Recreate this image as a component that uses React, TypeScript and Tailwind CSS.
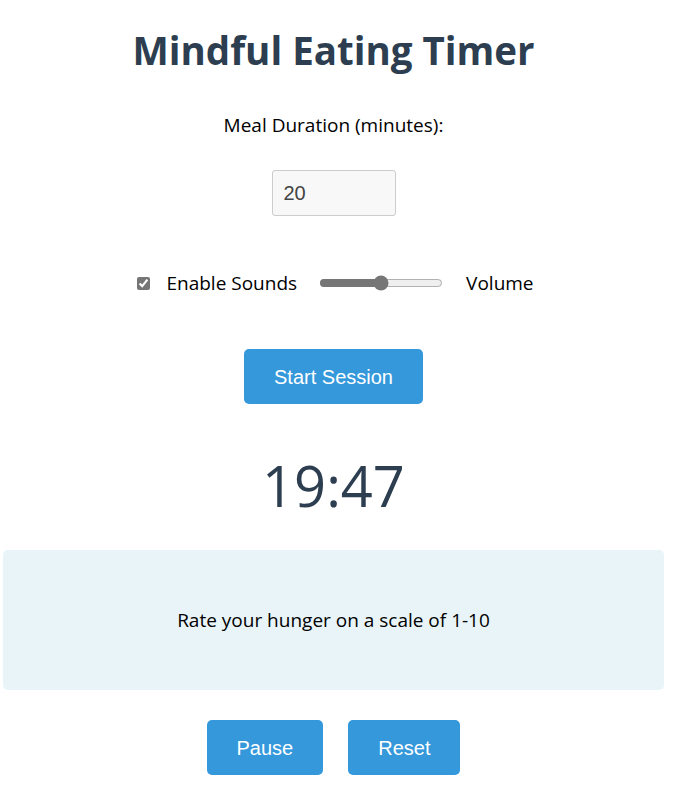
import { useState } from "react";

export default function App() {
  const [sounds, setSounds] = useState(true);
  const [volume, setVolume] = useState(50);

  return (
    <div className="min-h-[788px] bg-white">
      <div className="ml-[3px] w-[661px] text-center font-['Open_Sans',sans-serif] text-black">
        <h1 className="pt-[26px] text-[38.5px] font-bold leading-[48px] text-[#2c3e50]">Mindful Eating Timer</h1>

        <div className="mt-[39px] text-[19px] leading-[24px]">Meal Duration (minutes):</div>

        <div className="mt-[33px] flex justify-center">
          <input
            type="number"
            defaultValue={20}
            className="h-[46px] w-[124px] rounded-[3px] border border-[#cccccc] bg-[#f8f8f8] px-[11px] font-['Liberation_Sans',Arial,sans-serif] text-[20px] text-[#444] outline-none"
          />
        </div>

        <div className="mt-[52px] flex h-[30px] items-center justify-center pl-[4px] text-[19px]">
          <input
            type="checkbox"
            checked={sounds}
            onChange={(e) => setSounds(e.target.checked)}
            className="h-[13px] w-[13px] accent-[#767676]"
          />
          <span className="ml-[16px]">Enable Sounds</span>
          <input
            type="range"
            min={0}
            max={100}
            value={volume}
            onChange={(e) => setVolume(Number(e.target.value))}
            className="ml-[22px] w-[124px] accent-[#767676]"
          />
          <span className="ml-[23px]">Volume</span>
        </div>

        <div className="mt-[51px] flex justify-center">
          <button
            type="button"
            className="h-[55px] rounded-[5px] bg-[#3498db] px-[30px] font-['Liberation_Sans',Arial,sans-serif] text-[20px] text-white"
          >
            Start Session
          </button>
        </div>

        <div className="mt-[41px] text-[56px] font-normal leading-[80px] text-[#2c3e50]">19:47</div>

        <div className="mt-[25px] flex h-[140px] items-center justify-center rounded-[5px] bg-[#e8f4f8] text-[19px]">
          Rate your hunger on a scale of 1-10
        </div>

        <div className="mt-[30px] flex justify-center gap-[25px] pb-[13px]">
          <button
            type="button"
            className="h-[55px] rounded-[5px] bg-[#3498db] px-[30px] font-['Liberation_Sans',Arial,sans-serif] text-[20px] text-white"
          >
            Pause
          </button>
          <button
            type="button"
            className="h-[55px] rounded-[5px] bg-[#3498db] px-[30px] font-['Liberation_Sans',Arial,sans-serif] text-[20px] text-white"
          >
            Reset
          </button>
        </div>
      </div>
    </div>
  );
}
